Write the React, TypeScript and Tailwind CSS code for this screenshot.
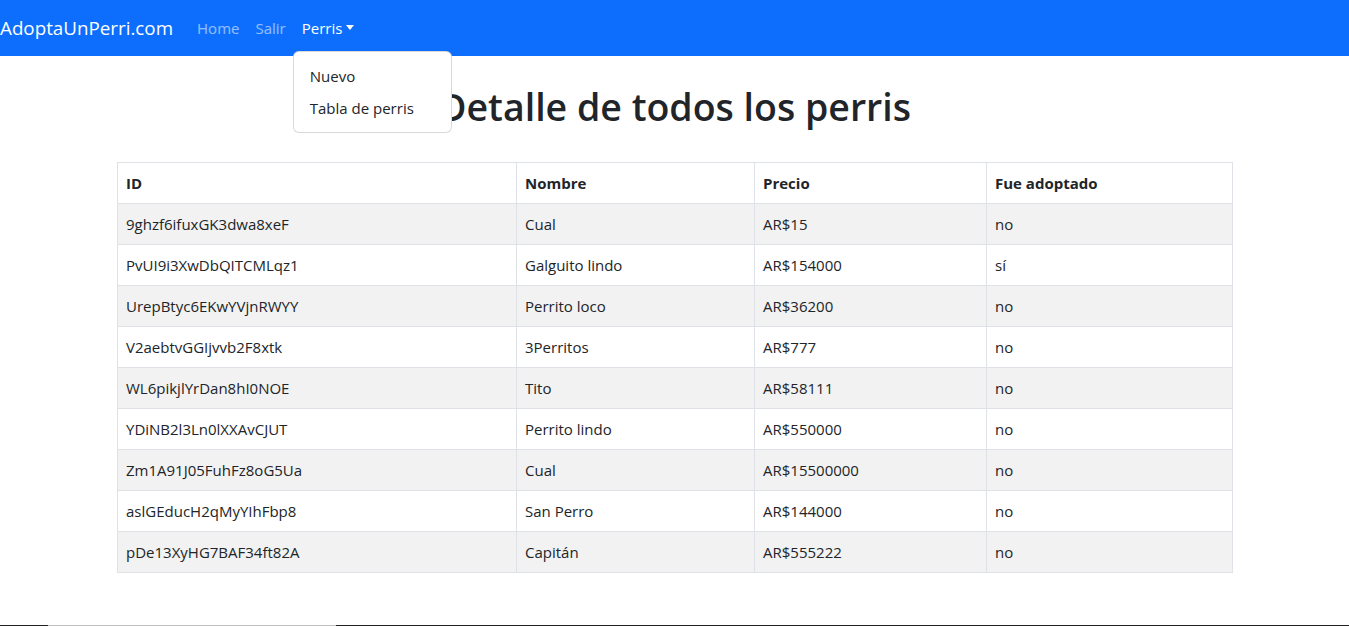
import React from "react";

type Perri = {
  id: string;
  nombre: string;
  precio: number;
  adoptado: boolean;
};

const perris: Perri[] = [
  { id: "9ghzf6ifuxGK3dwa8xeF", nombre: "Cual", precio: 15, adoptado: false },
  { id: "PvUI9i3XwDbQITCMLqz1", nombre: "Galguito lindo", precio: 154000, adoptado: true },
  { id: "UrepBtyc6EKwYVjnRWYY", nombre: "Perrito loco", precio: 36200, adoptado: false },
  { id: "V2aebtvGGIjvvb2F8xtk", nombre: "3Perritos", precio: 777, adoptado: false },
  { id: "WL6pikjlYrDan8hI0NOE", nombre: "Tito", precio: 58111, adoptado: false },
  { id: "YDiNB2l3Ln0lXXAvCJUT", nombre: "Perrito lindo", precio: 550000, adoptado: false },
  { id: "Zm1A91J05FuhFz8oG5Ua", nombre: "Cual", precio: 15500000, adoptado: false },
  { id: "aslGEducH2qMyYIhFbp8", nombre: "San Perro", precio: 144000, adoptado: false },
  { id: "pDe13XyHG7BAF34ft82A", nombre: "Capitán", precio: 555222, adoptado: false },
];

const font = { fontFamily: '"Open Sans", "Noto Sans", sans-serif' };

const Navbar: React.FC = () => {
  return (
    <nav className="relative flex h-14 items-center bg-[#0d6efd]">
      <a className="mr-4 text-[18.8px] leading-[30px] text-white">AdoptaUnPerri.com</a>
      <ul className="flex items-center text-[15px] leading-6">
        <li className="px-2 py-2 text-white/55">Home</li>
        <li className="px-2 py-2 text-white/55">Salir</li>
        <li className="relative px-2 py-2 text-white">
          Perris
          <span className="ml-[4px] inline-block translate-y-[-2px] border-x-[4px] border-t-[5px] border-x-transparent border-t-white align-middle" />
          {/* dropdown abierto */}
          <div className="absolute left-[-1px] top-[43px] z-10 w-[159px] rounded-md border border-black/15 bg-white py-2 text-[#212529]">
            <div className="px-4 py-1">Nuevo</div>
            <div className="px-4 py-1">Tabla de perris</div>
          </div>
        </li>
      </ul>
    </nav>
  );
};

const App: React.FC = () => {
  return (
    <div className="flex h-[626px] flex-col bg-white text-[#212529]" style={font}>
      <Navbar />
      <main className="pl-[117px] pr-[116px]">
        <h1 className="mt-[27px] text-center text-[37.5px] font-semibold leading-[48px]">
          Detalle de todos los perris
        </h1>
        <table className="mt-[31px] w-full border-collapse border border-[#dee2e6] text-[15px] leading-6">
          <thead>
            <tr>
              <th className="w-[399px] border border-[#dee2e6] px-2 py-2 text-left font-bold">ID</th>
              <th className="w-[238px] border border-[#dee2e6] px-2 py-2 text-left font-bold">Nombre</th>
              <th className="w-[232px] border border-[#dee2e6] px-2 py-2 text-left font-bold">Precio</th>
              <th className="border border-[#dee2e6] px-2 py-2 text-left font-bold">Fue adoptado</th>
            </tr>
          </thead>
          <tbody>
            {perris.map((p, i) => (
              <tr key={p.id} className={i % 2 === 0 ? "bg-[#f2f2f2]" : "bg-white"}>
                <td className="border border-[#dee2e6] px-2 py-2">{p.id}</td>
                <td className="border border-[#dee2e6] px-2 py-2">{p.nombre}</td>
                <td className="border border-[#dee2e6] px-2 py-2">AR${p.precio}</td>
                <td className="border border-[#dee2e6] px-2 py-2">{p.adoptado ? "sí" : "no"}</td>
              </tr>
            ))}
          </tbody>
        </table>
      </main>
      <div className="mt-auto flex h-px">
        <div className="w-12 bg-[#222222]" />
        <div className="w-[288px] bg-[#c0c0c0]" />
        <div className="flex-1 bg-[#222222]" />
      </div>
    </div>
  );
};

export default App;
